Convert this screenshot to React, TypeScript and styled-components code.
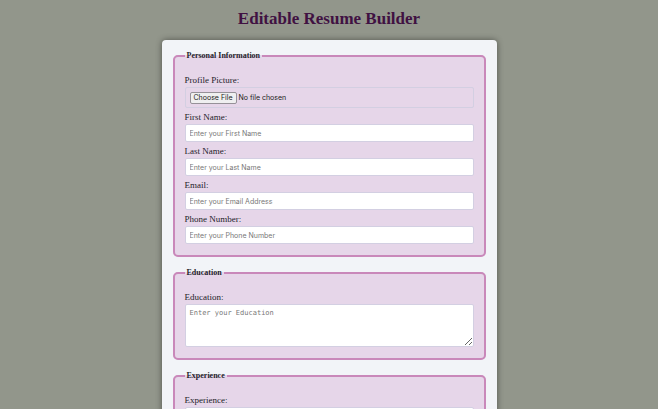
import React from "react";
import styled, { createGlobalStyle, css } from "styled-components";

const GlobalStyle = createGlobalStyle`
  * { box-sizing: border-box; }
  html { scrollbar-width: none; }
  body {
    margin: 0;
    background: #92968b;
    color: #241d29;
    font-family: "Liberation Serif", "Times New Roman", serif;
  }
`;

const Page = styled.main`
  display: flex;
  flex-direction: column;
  align-items: center;
  gap: 11px;
  padding: 9px 8px 24px;
`;

const Title = styled.h1`
  margin: 0;
  color: #401142;
  font-size: 17px;
  line-height: 20px;
`;

const Card = styled.form`
  display: flex;
  flex-direction: column;
  gap: 10px;
  width: 100%;
  max-width: 335px;
  padding: 10px 11px;
  border-radius: 4px;
  background: #f2f4f8;
  box-shadow: 0 0 6px rgba(0, 0, 0, 0.45);
`;

const Section = styled.fieldset`
  min-width: 0;
  margin: 0;
  padding: 13px 10px 11px;
  border: 2px solid #c988ba;
  border-radius: 5px;
  background: #e6d6e9;
`;

const SectionName = styled.legend`
  padding: 0 2px;
  font-size: 8px;
  font-weight: bold;
  line-height: 12px;
`;

const Field = styled.div`
  display: flex;
  flex-direction: column;
  gap: 2px;

  & + & {
    margin-top: 4px;
  }
`;

const Label = styled.label`
  font-size: 9px;
  line-height: 10px;
`;

const box = css`
  display: block;
  width: 100%;
  margin: 0;
  border: 1px solid #d3cfe2;
  border-radius: 2px;
  font-size: 7px;
`;

const TextInput = styled.input`
  ${box}
  height: 18px;
  padding: 0 4px;
  background: #fff;
  font-family: Inter, sans-serif;

  &::placeholder {
    color: #777;
  }
`;

const FileInput = styled.input`
  ${box}
  height: 21px;
  padding: 4px;
  color: #222;
  font-family: Inter, sans-serif;
  line-height: 10px;

  &::file-selector-button {
    height: 12px;
    margin: 0 2px 0 0;
    padding: 0 3px;
    border: 1px solid #969198;
    border-radius: 2px;
    background: #efeff0;
    color: #222;
    font: inherit;
  }
`;

const TextArea = styled.textarea`
  ${box}
  height: 43px;
  padding: 4px;
  background: #fff;
  font-family: "DejaVu Sans Mono", monospace;
  line-height: 9px;
  resize: vertical;

  &::placeholder {
    color: #777;
  }
`;

const textFields = [
  { id: "first-name", label: "First Name:", hint: "Enter your First Name", type: "text" },
  { id: "last-name", label: "Last Name:", hint: "Enter your Last Name", type: "text" },
  { id: "email", label: "Email:", hint: "Enter your Email Address", type: "email" },
  { id: "phone", label: "Phone Number:", hint: "Enter your Phone Number", type: "tel" },
];

const longSections = ["Education", "Experience"];

export default function App() {
  return (
    <Page>
      <GlobalStyle />
      <Title>Editable Resume Builder</Title>
      <Card>
        <Section>
          <SectionName>Personal Information</SectionName>
          <Field>
            <Label htmlFor="picture">Profile Picture:</Label>
            <FileInput id="picture" type="file" accept="image/*" />
          </Field>
          {textFields.map((field) => (
            <Field key={field.id}>
              <Label htmlFor={field.id}>{field.label}</Label>
              <TextInput id={field.id} type={field.type} placeholder={field.hint} />
            </Field>
          ))}
        </Section>
        {longSections.map((name) => (
          <Section key={name}>
            <SectionName>{name}</SectionName>
            <Field>
              <Label htmlFor={name}>{name}:</Label>
              <TextArea id={name} placeholder={`Enter your ${name}`} />
            </Field>
          </Section>
        ))}
      </Card>
    </Page>
  );
}
